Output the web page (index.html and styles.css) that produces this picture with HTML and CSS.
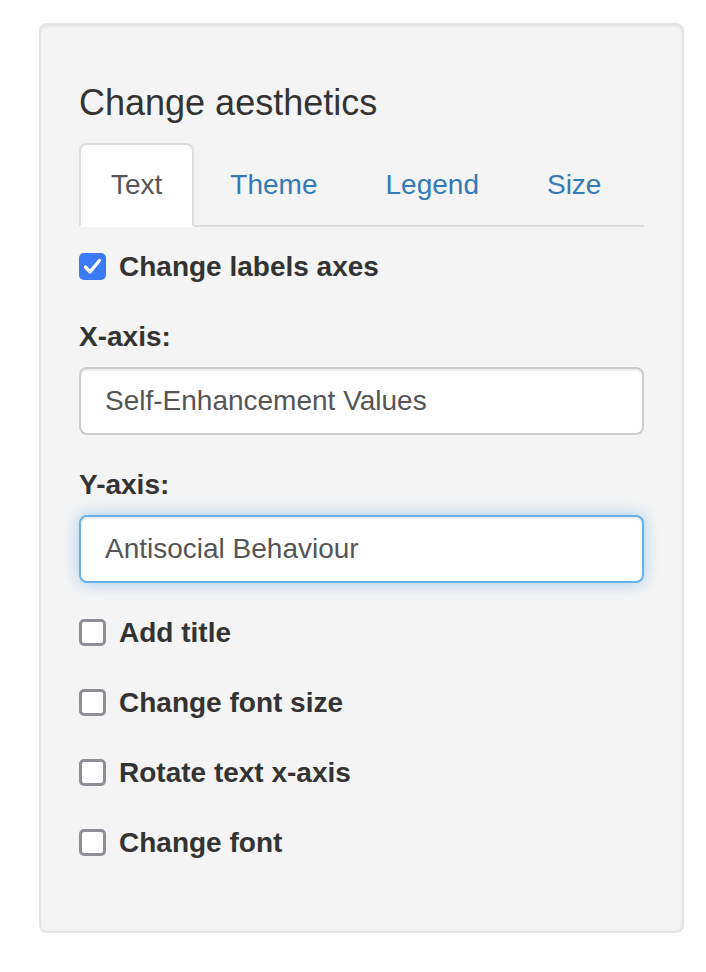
FILE: index.html
```html
<!DOCTYPE html>
<html lang="en">
<head>
    <meta charset="UTF-8">
    <meta name="viewport" content="width=device-width, initial-scale=1.0">
    <title>Change aesthetics</title>
    <link rel="stylesheet" href="styles.css">
</head>
<body>
    <div class="well">
        <h4>Change aesthetics</h4>

        <ul class="nav-tabs">
            <li class="active"><a href="#text">Text</a></li>
            <li><a href="#theme">Theme</a></li>
            <li><a href="#legend">Legend</a></li>
            <li><a href="#size">Size</a></li>
        </ul>

        <div class="tab-content">
            <div class="form-group">
                <div class="checkbox">
                    <label><input type="checkbox" checked><span>Change labels axes</span></label>
                </div>
            </div>

            <div class="form-group">
                <label class="control-label" for="x-axis">X-axis:</label>
                <input id="x-axis" class="form-control" type="text" value="Self-Enhancement Values">
            </div>

            <div class="form-group">
                <label class="control-label" for="y-axis">Y-axis:</label>
                <input id="y-axis" class="form-control focused" type="text" value="Antisocial Behaviour">
            </div>

            <div class="form-group">
                <div class="checkbox">
                    <label><input type="checkbox"><span>Add title</span></label>
                </div>
            </div>
            <div class="form-group">
                <div class="checkbox">
                    <label><input type="checkbox"><span>Change font size</span></label>
                </div>
            </div>
            <div class="form-group">
                <div class="checkbox">
                    <label><input type="checkbox"><span>Rotate text x-axis</span></label>
                </div>
            </div>
            <div class="form-group">
                <div class="checkbox">
                    <label><input type="checkbox"><span>Change font</span></label>
                </div>
            </div>
        </div>
    </div>
</body>
</html>
```

FILE: styles.css
```css
* {
    box-sizing: border-box;
}
body {
    font-family: "Liberation Sans", Arial, sans-serif;
    font-size: 28px;
    line-height: 40px;
    color: #333;
    margin: 0;
    background: #fff;
}
.well {
    margin: 23px 0 0 39px;
    width: 645px;
    min-height: 40px;
    padding: 38px;
    background: #f4f4f4;
    border: 2px solid #e3e3e3;
    border-radius: 8px;
    box-shadow: inset 0 2px 2px rgba(0,0,0,0.05);
}
h4 {
    font-size: 36px;
    font-weight: 500;
    line-height: 1.1;
    margin: 20px 0 20px;
}
.nav-tabs {
    list-style: none;
    margin: 0;
    padding: 0;
    display: flex;
    border-bottom: 2px solid #ddd;
}
.nav-tabs li {
    margin-bottom: -2px;
}
.nav-tabs a {
    display: block;
    padding: 20px 30px;
    margin-right: 4px;
    line-height: 40px;
    border: 2px solid transparent;
    border-radius: 8px 8px 0 0;
    color: #337ab7;
    text-decoration: none;
}
.nav-tabs li.active a {
    color: #555;
    background: #fff;
    border-color: #ddd;
    border-bottom-color: transparent;
}
.form-group {
    margin-bottom: 30px;
}
.checkbox {
    margin: 20px 0;
}
.checkbox label {
    display: flex;
    align-items: center;
    gap: 13px;
    font-weight: bold;
    min-height: 40px;
}
.checkbox input {
    appearance: none;
    -webkit-appearance: none;
    margin: 0;
    width: 27px;
    height: 27px;
    border: 3px solid #8e8e96;
    border-radius: 5px;
    background: #fff;
    flex-shrink: 0;
}
.checkbox input:checked {
    border: none;
    background: #3a7af5 url("data:image/svg+xml,%3Csvg xmlns='http://www.w3.org/2000/svg' viewBox='0 0 27 27'%3E%3Cpath d='M6.5 14l4.5 4.8L20.5 7.5' fill='none' stroke='white' stroke-width='3.4' stroke-linecap='round' stroke-linejoin='round'/%3E%3C/svg%3E") center / 27px 27px no-repeat;
}
.control-label {
    display: inline-block;
    margin-bottom: 10px;
    font-weight: bold;
}
.form-control {
    display: block;
    width: 100%;
    height: 68px;
    padding: 12px 24px;
    font-family: inherit;
    font-size: 28px;
    line-height: 40px;
    color: #555;
    background: #fff;
    border: 2px solid #ccc;
    border-radius: 8px;
    box-shadow: inset 0 2px 2px rgba(0,0,0,0.075);
    outline: none;
}
.form-control.focused {
    border-color: #66afe9;
    box-shadow: inset 0 2px 2px rgba(0,0,0,0.075), 0 0 16px rgba(102,175,233,0.6);
}
```
